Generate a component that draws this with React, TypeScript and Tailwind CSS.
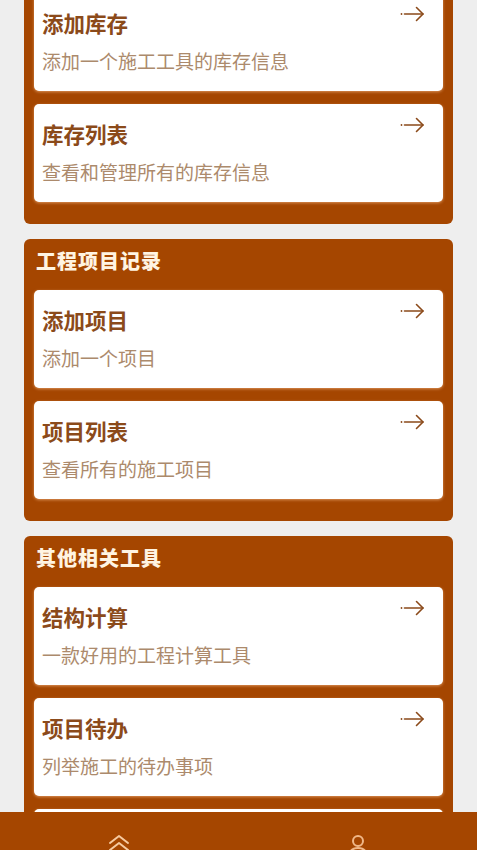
import React from 'react';

interface Item {
  title: string;
  desc: string;
}

interface Section {
  name: string;
  items: Item[];
}

const sections: Section[] = [
  {
    name: '工具库存管理',
    items: [
      { title: '添加库存', desc: '添加一个施工工具的库存信息' },
      { title: '库存列表', desc: '查看和管理所有的库存信息' },
    ],
  },
  {
    name: '工程项目记录',
    items: [
      { title: '添加项目', desc: '添加一个项目' },
      { title: '项目列表', desc: '查看所有的施工项目' },
    ],
  },
  {
    name: '其他相关工具',
    items: [
      { title: '结构计算', desc: '一款好用的工程计算工具' },
      { title: '项目待办', desc: '列举施工的待办事项' },
      { title: '施工日志', desc: '记录每天的施工情况' },
    ],
  },
];

function ArrowIcon() {
  return (
    <svg width="26" height="16" viewBox="0 0 26 16" fill="none" stroke="#8b4a1a" strokeWidth="1.6" strokeLinecap="round" strokeLinejoin="round">
      <circle cx="1.5" cy="8" r="0.9" fill="#8b4a1a" stroke="none" />
      <path d="M4.5 8H23" />
      <path d="M16.5 1.5L23 8L16.5 14.5" />
    </svg>
  );
}

function Card({ item }: { item: Item }) {
  return (
    <div className="relative h-[98px] rounded-[5px] bg-white px-2 shadow-[0_1px_3px_rgba(255,200,150,0.6)]">
      <div className="pt-[16px] text-[21.5px] font-bold leading-[30px] text-[#8b4a1a]">{item.title}</div>
      <div className="mt-[10px] text-[19px] leading-[26px] text-[#ac8a6c]">{item.desc}</div>
      <div className="absolute right-[17px] top-[13px]">
        <ArrowIcon />
      </div>
    </div>
  );
}

export default function App() {
  return (
    <div
      className="relative h-[850px] overflow-hidden bg-[#eeeeee]"
      style={{ fontFamily: '"Noto Sans", "Noto Sans CJK SC", sans-serif' }}
    >
      <div className="-mt-[58px] flex flex-col gap-[15px] px-6">
        {sections.map((s) => (
          <div key={s.name} className="rounded-[6px] bg-[#a54600] px-[10px] pb-[22px]">
            <div className="h-[51px] px-[2px] pt-[10px] text-[20px] font-black leading-[26px] tracking-[1px] text-[#fff4e2]">
              {s.name}
            </div>
            <div className="flex flex-col gap-[13px]">
              {s.items.map((it) => (
                <Card key={it.title} item={it} />
              ))}
            </div>
          </div>
        ))}
      </div>

      {/* bottom tab bar */}
      <div className="absolute bottom-0 left-0 right-0 grid h-[38px] grid-cols-2 bg-[#a54600]">
        <div className="flex justify-center pt-[21px]">
          <svg width="24" height="22" viewBox="0 0 24 22" fill="none" stroke="#f6caa0" strokeWidth="2" strokeLinecap="round" strokeLinejoin="round">
            <path d="M3 10L12 3L21 10" />
            <path d="M3 17L12 10L21 17" />
          </svg>
        </div>
        <div className="flex justify-center pt-[22px]">
          <svg width="24" height="22" viewBox="0 0 24 22" fill="none" stroke="#f0b888" strokeWidth="2" strokeLinecap="round">
            <circle cx="12" cy="7" r="5" />
            <path d="M3 21C4 16 8 14 12 14C16 14 20 16 21 21" />
          </svg>
        </div>
      </div>
    </div>
  );
}
